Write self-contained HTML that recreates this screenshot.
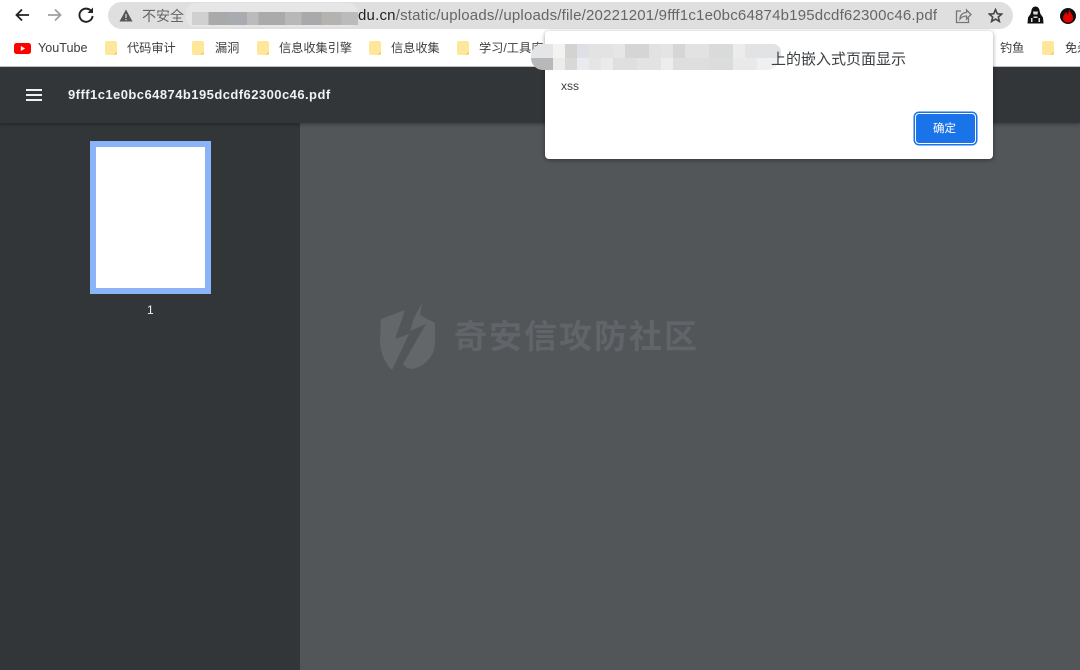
<!DOCTYPE html>
<html lang="zh"><head><meta charset="utf-8"><style>
html,body{margin:0;padding:0;width:1080px;height:670px;overflow:hidden;background:#fff;font-family:"Liberation Sans","Noto Sans CJK SC",sans-serif}
div,span,svg{position:absolute}
.t{white-space:nowrap;line-height:1}
.bm{font-size:12.200px;color:#3c4043;top:42px}
.f{width:12px;height:14px;background:linear-gradient(135deg,#fee79b 0 85%,#f5cf62 85% 100%);border-radius:2px;top:41px}
</style></head><body>
<!-- toolbar -->
<svg style="left:13px;top:6px" width="18" height="18" viewBox="0 0 18 18"><path d="M16 9H3.500M9 3.500L3.500 9 9 14.500" fill="none" stroke="#222" stroke-width="1.800"/></svg>
<svg style="left:46px;top:6px" width="18" height="18" viewBox="0 0 18 18"><path d="M2 9h12.500M9 3.500L14.500 9 9 14.500" fill="none" stroke="#a0a0a0" stroke-width="1.800"/></svg>
<svg style="left:77px;top:6px" width="18" height="18" viewBox="0 0 18 18"><path d="M14.500 5.500A6.600 6.600 0 1 0 15.600 10" fill="none" stroke="#222" stroke-width="1.900"/><path d="M16 1.500V7h-5.500z" fill="#222"/></svg>
<div style="left:108px;top:2px;width:905px;height:27px;background:#dfdfdf;border-radius:14px"></div>
<svg style="left:119px;top:9px" width="14" height="13" viewBox="0 0 14 13"><path d="M7 .5L13.500 12.500H.5z" fill="#555"/><path d="M6.400 5h1.200v4H6.400zM6.400 10h1.200v1.200H6.400z" fill="#dfdfdf"/></svg>
<div class="t" style="left:142px;top:9px;font-size:14px;color:#666">不安全</div>
<div class="t" style="left:358px;top:8px;font-size:15px;letter-spacing:.2px;color:#666"><span style="position:static;color:#222">du.cn</span>/static/uploads//uploads/file/20221201/9fff1c1e0bc64874b195dcdf62300c46.pdf</div>
<div style="left:186px;top:3px;width:172px;height:24px;background:#e6e6e6;border-radius:10px"></div>
<div style="left:192px;top:12px;width:166px;height:13px;background:linear-gradient(90deg,#d0d0d0 0 10%,#a9a9a9 10% 22%,#a8abb0 22% 33%,#bbb 33% 40%,#aaa 40% 56%,#b8b8b8 56% 66%,#a9a9ac 66% 78%,#b5b3b0 78% 90%,#bbb 90% 100%)"></div>
<svg style="left:955px;top:8px" width="17" height="16" viewBox="0 0 17 16"><path d="M6 3H1.500v11.500h12V10M5 11c0-4 3-6.500 6.500-6.500V2l4.500 4.500-4.500 4.500V8C9 8 6.500 9 5 11z" fill="none" stroke="#777" stroke-width="1.300"/></svg>
<svg style="left:988px;top:8px" width="15" height="15" viewBox="0 0 17 17"><path d="M8.500 1.800l2 4.700 5 .4-3.800 3.300 1.200 5-4.400-2.700-4.400 2.700 1.200-5L1.500 6.900l5-.4z" fill="none" stroke="#444" stroke-width="1.800"/></svg>
<svg style="left:1027px;top:6px" width="17" height="18" viewBox="0 0 17 18"><path d="M8.500 .5C6 .5 4.500 2.500 4.300 5.500L3.500 8 1 11.500 .5 17.500h16L16 11.500 13.500 8l-.8-2.500C12.500 2.500 11 .5 8.500 .5z" fill="#111"/><path d="M6 5.500h5l-.5 3h-4zM4 12h1.500v4H4zM11.500 12H13v4h-1.500zM6.500 10.500h4V12h-4z" fill="#ddd"/></svg>
<div style="left:1060px;top:8px;width:16px;height:16px;border-radius:50%;background:#111"></div>
<svg style="left:1062px;top:8px" width="12" height="15" viewBox="0 0 12 15"><path d="M7 .5C7 4 11 6 11 10c0 3-2.500 4.500-5 4.500S1 13 1 10c0-2.500 2-3.500 2.500-6C5 5 5.500 6 5.500 7 6.500 5.500 7 3 7 .5z" fill="#e60000"/></svg>
<!-- bookmarks -->
<svg style="left:14px;top:43px" width="17" height="11" viewBox="0 0 17 11"><rect width="17" height="11" rx="2.500" fill="#f00"/><path d="M6.800 3v5l4.300-2.500z" fill="#fff"/></svg>
<div class="t bm" style="left:38px;font-size:12.600px">YouTube</div>
<div class="f" style="left:105px"></div><div class="t bm" style="left:127px">代码审计</div>
<div class="f" style="left:192px"></div><div class="t bm" style="left:215px">漏洞</div>
<div class="f" style="left:257px"></div><div class="t bm" style="left:279px">信息收集引擎</div>
<div class="f" style="left:369px"></div><div class="t bm" style="left:391px">信息收集</div>
<div class="f" style="left:457px"></div><div class="t bm" style="left:479px">学习/工具库</div>
<div class="t bm" style="left:1000px">钓鱼</div>
<div class="f" style="left:1042px"></div><div class="t bm" style="left:1065px">免杀</div>
<!-- viewer -->
<div style="left:0;top:66px;width:1080px;height:604px;background:#525659"></div>
<div style="left:0;top:66px;width:1080px;height:1px;background:#c4c4c4"></div>
<div style="left:0;top:123px;width:300px;height:547px;background:#323639"></div>
<div style="left:0;top:67px;width:1080px;height:56px;background:#323639;box-shadow:0 2px 3px rgba(0,0,0,.25)"></div>
<div style="left:26px;top:89px;width:16px;height:2px;background:#f1f1f1"></div>
<div style="left:26px;top:94px;width:16px;height:2px;background:#f1f1f1"></div>
<div style="left:26px;top:99px;width:16px;height:2px;background:#f1f1f1"></div>
<div class="t" style="left:68px;top:88px;font-size:13px;font-weight:bold;color:#f1f1f1;letter-spacing:.45px">9fff1c1e0bc64874b195dcdf62300c46.pdf</div>
<div style="left:90px;top:141px;width:109px;height:141px;border:6px solid #8ab4f8;background:#fff"></div>
<div class="t" style="left:147px;top:304px;font-size:12px;color:#f1f1f1">1</div>
<!-- watermark -->
<svg style="left:378px;top:298px" width="60" height="74" viewBox="0 0 60 74"><path d="M3 21L27 12 17 41 31 36 14 72C8 66 2 56 2 42zM36 20L44 5 42 17 57 25V45C57 58 46 69 34 71 30 71 27 69 25 66L48 26 32 33z" fill="#64676a"/></svg>
<div class="t" style="left:454px;top:318px;font-size:33px;font-weight:bold;color:#616468;letter-spacing:2px;font-family:'Noto Sans CJK SC',sans-serif">奇安信攻防社区</div>
<!-- dialog -->
<div style="left:545px;top:31px;width:448px;height:128px;background:#fff;border-radius:4px;box-shadow:0 1px 4px rgba(0,0,0,.4)"></div>
<div style="left:531px;top:44px;width:22px;height:26px;border-radius:12px 0 0 12px;background:linear-gradient(#e4e5e7 0 14px,#b8b8b8 14px 26px)"></div>
<div style="left:541px;top:44px;width:240px;height:14px;border-radius:0 8px 0 0;background:linear-gradient(90deg,#e4e5e7 0 12px,#f3f3f1 12px 24px,#d5d3d2 24px 36px,#dde0e4 36px 48px,#e3e3e3 48px 72px,#e6e6e6 72px 84px,#d5d5d5 84px 108px,#e0e2e4 108px 120px,#e6e3e3 120px 132px,#d6d6d6 132px 144px,#e2e2e3 144px 168px,#d9dadb 168px 192px,#ececec 192px 204px,#e2e3e4 204px 240px)"></div>
<div style="left:553px;top:58px;width:226px;height:12px;border-radius:0 0 12px 0;background:linear-gradient(90deg,#ececec 0 12px,#d8d8d8 12px 24px,#e9ebee 24px 36px,#e5e5e3 36px 48px,#ebebeb 48px 60px,#dedfe0 60px 84px,#e3e3e3 84px 108px,#ededed 108px 120px,#dedede 120px 156px,#dcdcdc 156px 180px,#e9e9e9 180px 204px,#f0f0f0 204px 226px)"></div>
<div class="t" style="left:771px;top:52px;font-size:15px;color:#3c4043">上的嵌入式页面显示</div>
<div class="t" style="left:561px;top:80px;font-size:12px;color:#3c4043">xss</div>
<div style="left:915px;top:113px;width:59px;height:29px;background:#1a73e8;border:1px solid #fff;box-shadow:0 0 0 1.500px #1a73e8;border-radius:4px"></div>
<div class="t" style="left:933px;top:124px;font-size:11.500px;color:#fff">确定</div>
</body></html>
